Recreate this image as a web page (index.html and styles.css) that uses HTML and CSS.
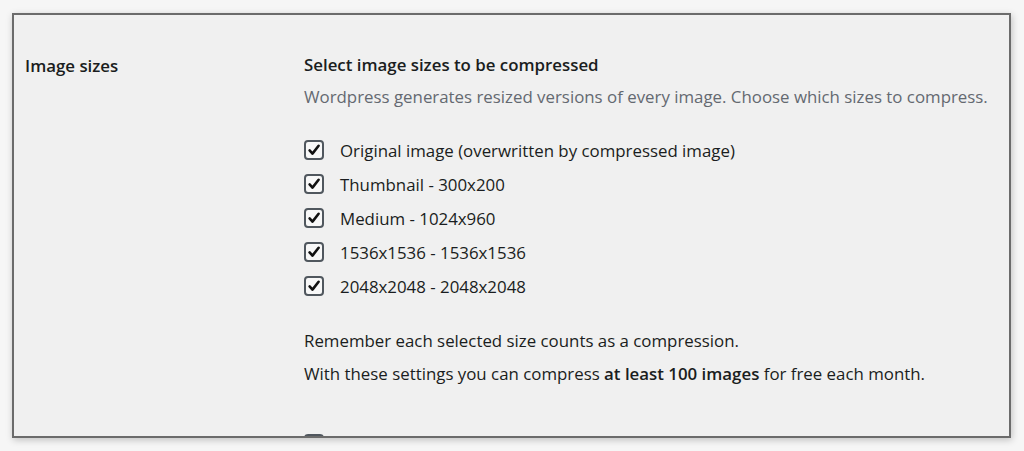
FILE: index.html
```html
<!DOCTYPE html>
<html lang="en">
<head>
    <meta charset="UTF-8">
    <title>Image sizes</title>
    <link rel="stylesheet" href="styles.css">
</head>
<body>
    <div class="frame">
        <div class="panel">
            <div class="setting">
                <div class="setting-label">Image sizes</div>
                <div class="setting-body">
                    <h3 class="title">Select image sizes to be compressed</h3>
                    <p class="description">Wordpress generates resized versions of every image. Choose which sizes to compress.</p>

                    <ul class="sizes">
                        <li><span class="check"><svg viewBox="0 0 16 16"><path d="M3.6 8.4l2.9 3.2L12.6 3.8"/></svg></span>Original image (overwritten by compressed image)</li>
                        <li><span class="check"><svg viewBox="0 0 16 16"><path d="M3.6 8.4l2.9 3.2L12.6 3.8"/></svg></span>Thumbnail - 300x200</li>
                        <li><span class="check"><svg viewBox="0 0 16 16"><path d="M3.6 8.4l2.9 3.2L12.6 3.8"/></svg></span>Medium - 1024x960</li>
                        <li><span class="check"><svg viewBox="0 0 16 16"><path d="M3.6 8.4l2.9 3.2L12.6 3.8"/></svg></span>1536x1536 - 1536x1536</li>
                        <li><span class="check"><svg viewBox="0 0 16 16"><path d="M3.6 8.4l2.9 3.2L12.6 3.8"/></svg></span>2048x2048 - 2048x2048</li>
                    </ul>

                    <p class="note">Remember each selected size counts as a compression.</p>
                    <p class="note second">With these settings you can compress <strong>at least 100 images</strong> for free each month.</p>

                    <div class="next-row"><span class="check"></span></div>
                </div>
            </div>
        </div>
    </div>
</body>
</html>
```

FILE: styles.css
```css
html, body {
    margin: 0;
    height: 100%;
    background: #f6f6f6;
}
body {
    font-family: "Open Sans", "Noto Sans", sans-serif;
    font-size: 16.85px;
    color: #1a1d20;
}
.frame {
    padding: 13px 13px 13px 12px;
    height: 451px;
    box-sizing: border-box;
}
.panel {
    height: 100%;
    box-sizing: border-box;
    background: #f0f0f0;
    border: 2px solid #6b6b6b;
    box-shadow: 1px 2px 7px rgba(0, 0, 0, 0.22);
    overflow: hidden;
}
.setting {
    display: grid;
    grid-template-columns: 279px 1fr;
    padding: 38px 0 0 11px;
}
.setting-label {
    font-weight: 600;
    line-height: 24px;
    padding-top: 1px;
}
.title {
    margin: 0 0 8px;
    font-size: 16.85px;
    font-weight: 600;
    line-height: 24px;
}
.description {
    margin: 0;
    color: #646970;
    line-height: 24px;
}
.sizes {
    list-style: none;
    margin: 24px 0 0;
    padding: 0;
}
.sizes li {
    display: flex;
    align-items: center;
    gap: 16px;
    height: 34px;
}
.check {
    width: 20px;
    height: 20px;
    box-sizing: border-box;
    border: 2px solid #50575e;
    border-radius: 4px;
    background: #f8f8f8;
    flex: none;
}
.check svg {
    display: block;
    width: 16px;
    height: 16px;
    fill: none;
    stroke: #111;
    stroke-width: 2.6;
    stroke-linecap: round;
    stroke-linejoin: round;
}
.note {
    margin: 26px 0 0;
    line-height: 24px;
}
.note.second {
    margin-top: 9px;
}
.note strong {
    font-weight: 600;
}
.next-row {
    margin-top: 48px;
}
.next-row .check {
    display: block;
}
```
